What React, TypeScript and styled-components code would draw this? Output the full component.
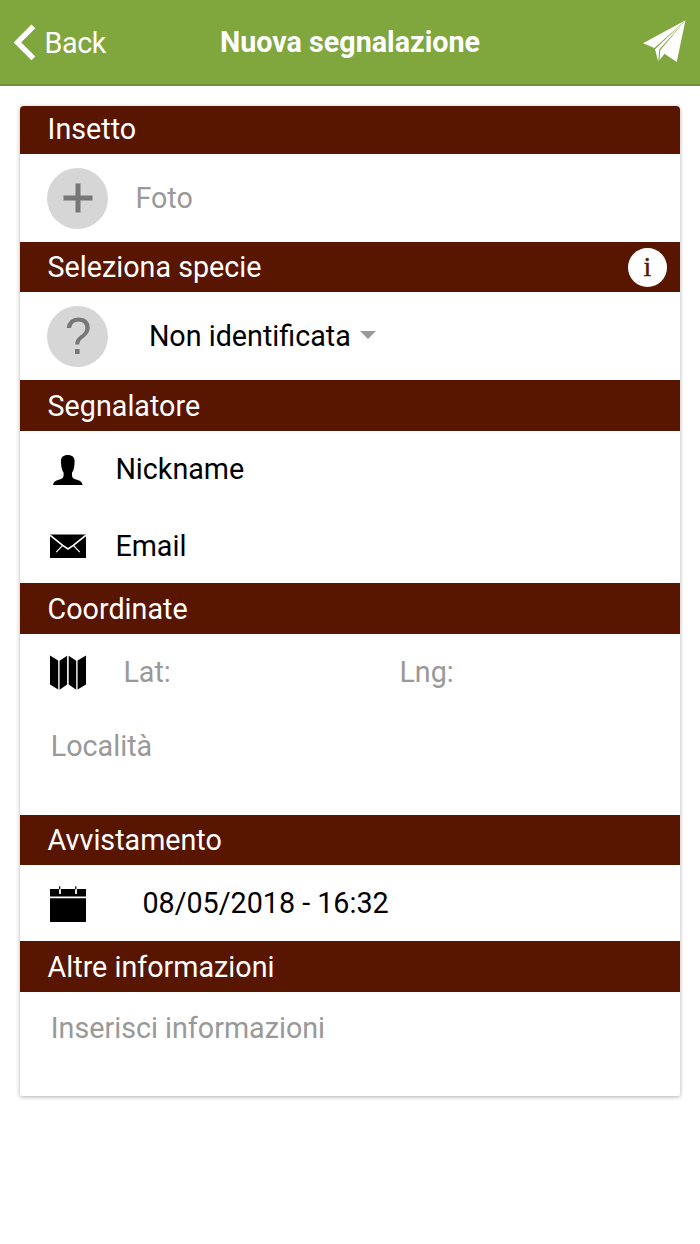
import React from "react";
import styled, { createGlobalStyle } from "styled-components";

const GlobalStyle = createGlobalStyle`
  * { box-sizing: border-box; }
  body {
    margin: 0;
    background: #fff;
    color: #000;
    font-family: Roboto, "Liberation Sans", sans-serif;
    font-size: 28.7px;
  }
`;

const Screen = styled.div`
  width: 700px;
  min-height: 1244px;
  background: #fff;
`;

const Toolbar = styled.header`
  display: grid;
  grid-template-columns: 1fr auto 1fr;
  align-items: center;
  height: 86px;
  padding: 0 14px 0 13px;
  color: #fff;
  background: #80a63e;
  border-bottom: 2px solid #6f9037;
`;

const BackButton = styled.button`
  display: flex;
  align-items: center;
  gap: 8.5px;
  padding: 1px 0 0;
  border: 0;
  background: none;
  color: inherit;
  font: inherit;
  letter-spacing: -0.4px;
`;

const Title = styled.h1`
  margin: 0;
  padding-left: 1px;
  font-size: 28.7px;
  font-weight: 700;
  line-height: 34px;
`;

const SendButton = styled.button`
  display: flex;
  justify-self: end;
  margin-bottom: 2px;
  padding: 0;
  border: 0;
  background: none;
  color: inherit;
`;

const Card = styled.main`
  display: flex;
  flex-direction: column;
  margin: 20px 20px 0 20.4px;
  padding-bottom: 1px;
  border-radius: 4px 4px 2px 2px;
  overflow: hidden;
  background: #fff;
  box-shadow: 0 1px 4px rgba(0, 0, 0, 0.32);
`;

const SectionHeader = styled.h2<{ $height: number; $drop?: number; $lift?: number }>`
  display: flex;
  align-items: center;
  justify-content: space-between;
  height: ${(p) => p.$height}px;
  margin: 0;
  padding: ${(p) => p.$drop ?? 0}px 13px ${(p) => p.$lift ?? 0}px 27.2px;
  background: #581500;
  color: #fff;
  font-size: 28.7px;
  font-weight: 400;
`;

const Row = styled.div<{ $height: number; $gap: number; $top?: number }>`
  display: flex;
  align-items: center;
  gap: ${(p) => p.$gap}px;
  height: ${(p) => p.$height}px;
  padding: ${(p) => p.$top ?? 0}px 27px 0;
`;

const Label = styled.span<{ $muted?: boolean; $width?: number; $lift?: number }>`
  color: ${(p) => (p.$muted ? "#999" : "#000")};
  width: ${(p) => (p.$width ? `${p.$width}px` : "auto")};
  padding-bottom: ${(p) => p.$lift ?? 0}px;
  line-height: 34px;
  white-space: nowrap;
`;

const NoteArea = styled.div<{ $height: number; $top: number }>`
  height: ${(p) => p.$height}px;
  padding: ${(p) => p.$top}px 30.4px 0;
`;

const RoundButton = styled.span`
  display: flex;
  align-items: center;
  justify-content: center;
  flex: none;
  width: 61px;
  height: 61px;
  border-radius: 50%;
  background: #d6d6d6;
  color: #777;
  font-family: "Liberation Sans", sans-serif;
  font-size: 51px;
  line-height: 61px;
`;

const InfoButton = styled.span`
  display: flex;
  align-items: center;
  justify-content: center;
  width: 39px;
  height: 39px;
  padding-bottom: 1px;
  border-radius: 50%;
  background: #fff;
  color: #581500;
  font-family: "Liberation Serif", serif;
  font-size: 28px;
  line-height: 38px;
  -webkit-text-stroke: 0.4px #581500;
`;

const Select = styled.div`
  display: flex;
  align-items: center;
  gap: 9px;
`;

const Caret = styled.span`
  margin-bottom: 2px;
  border: 8px solid transparent;
  border-top-color: #999;
  border-bottom: 0;
`;

const IconSlot = styled.span<{ $drop?: number }>`
  display: flex;
  justify-content: center;
  flex: none;
  width: 41px;
  padding-top: ${(p) => p.$drop ?? 0}px;
`;

const QuestionMark = styled.span`
  transform: translateY(-0.5px) scaleX(0.94);
`;

function BackIcon() {
  return (
    <svg width="23" height="37" viewBox="0 0 23 37">
      <path d="M20.4 2.4 4.4 18.4 20.4 34.4" fill="none" stroke="#fff" strokeWidth="5.4" />
    </svg>
  );
}

function SendIcon() {
  return (
    <svg width="43" height="43" viewBox="0 0 43 43" fill="#fff">
      <path d="M42.5.3 0 23.2l11.4 4.7Z" />
      <path d="M42.5.3 12 29.2l3.3 12.6.9-12.4Z" />
      <path d="M42.5.3 17.2 30.2 16.6 40l4.9-6.2 12.2 8.2Z" />
    </svg>
  );
}

function PlusIcon() {
  return (
    <svg width="30" height="30" viewBox="0 0 30 30">
      <path d="M15 .5v29M.5 15h29" stroke="#777" strokeWidth="5" />
    </svg>
  );
}

function PersonIcon() {
  return (
    <svg width="30" height="30" viewBox="0 0 30 30">
      <path d="M14.8 0C10.4 0 8 2.3 8 5.8c0 3.4.3 6.2.8 7.8.4 1.6.9 2.9 1.7 4 .3 1.8.2 3.3-.3 4.600-.6 1.200-2.200 1.900-4.500 2.500C2.600 25.500.4 26.900 0 30h29.600c-.4-3.100-2.600-4.500-5.700-5.300-2.300-.6-3.900-1.300-4.500-2.500-.5-1.300-.6-2.800-.3-4.600.8-1.100 1.300-2.400 1.700-4 .5-1.600.8-4.400.8-7.800C21.600 2.300 19.200 0 14.800 0Z" />
    </svg>
  );
}

function MailIcon() {
  return (
    <svg width="36" height="25" viewBox="0 0 36 25">
      <path d="M0 .5h36V24H0Z" />
      <path d="M0 1.2 12.7 11.3 18 15 23.3 11.3 36 1.2" fill="none" stroke="#fff" strokeWidth="1.6" />
      <path d="M12.7 11.3 6.2 18.2M23.3 11.3l6.5 6.900" stroke="#fff" strokeWidth="1.2" />
    </svg>
  );
}

function MapIcon() {
  return (
    <svg width="36" height="35" viewBox="0 0 36 35">
      <path d="m0 .5 8.2 5.1v29L0 29.5ZM9.6 5.8 17.1.8v28.8l-7.5 5.2ZM18.7.8l7.5 5v29l-7.5-5.2ZM27.6 5.6 36 .5v29l-8.4 5.1Z" />
    </svg>
  );
}

function CalendarIcon() {
  return (
    <svg width="36" height="36" viewBox="0 0 36 36">
      <path d="M0 12.3h36V36H0ZM0 3h36v7.6H0Z" />
      <path d="M10 3v5M26 3v5" stroke="#fff" strokeWidth="1.8" />
      <path d="M9.7.2v3M25.8.2v3" stroke="#000" strokeWidth="1.2" />
    </svg>
  );
}

export default function App() {
  return (
    <>
      <GlobalStyle />
      <Screen>
        <Toolbar>
          <BackButton>
            <BackIcon />
            Back
          </BackButton>
          <Title>Nuova segnalazione</Title>
          <SendButton aria-label="Invia">
            <SendIcon />
          </SendButton>
        </Toolbar>
        <Card>
          <SectionHeader $height={48} $lift={2}>Insetto</SectionHeader>
          <Row $height={88} $gap={27}>
            <RoundButton>
              <PlusIcon />
            </RoundButton>
            <Label $muted>Foto</Label>
          </Row>

          <SectionHeader $height={50}>
            Seleziona specie
            <InfoButton>i</InfoButton>
          </SectionHeader>
          <Row $height={88} $gap={40.5}>
            <RoundButton>
              <QuestionMark>?</QuestionMark>
            </RoundButton>
            <Select>
              <Label>Non identificata</Label>
              <Caret />
            </Select>
          </Row>

          <SectionHeader $height={51} $drop={1}>Segnalatore</SectionHeader>
          <Row $height={76} $gap={27} $top={1}>
            <IconSlot>
              <PersonIcon />
            </IconSlot>
            <Label $lift={2}>Nickname</Label>
          </Row>
          <Row $height={76} $gap={27} $top={1}>
            <IconSlot $drop={2}>
              <MailIcon />
            </IconSlot>
            <Label>Email</Label>
          </Row>

          <SectionHeader $height={51} $drop={1}>Coordinate</SectionHeader>
          <Row $height={76} $gap={35} $top={1}>
            <IconSlot>
              <MapIcon />
            </IconSlot>
            <Label $muted $width={241} $lift={2}>Lat:</Label>
            <Label $muted $lift={2}>Lng:</Label>
          </Row>
          <NoteArea $height={105} $top={19}>
            <Label $muted>Località</Label>
          </NoteArea>

          <SectionHeader $height={50}>Avvistamento</SectionHeader>
          <Row $height={76} $gap={54}>
            <IconSlot $drop={2}>
              <CalendarIcon />
            </IconSlot>
            <Label>08/05/2018 - 16:32</Label>
          </Row>

          <SectionHeader $height={51} $drop={1}>Altre informazioni</SectionHeader>
          <NoteArea $height={103} $top={19}>
            <Label $muted>Inserisci informazioni</Label>
          </NoteArea>
        </Card>
      </Screen>
    </>
  );
}
